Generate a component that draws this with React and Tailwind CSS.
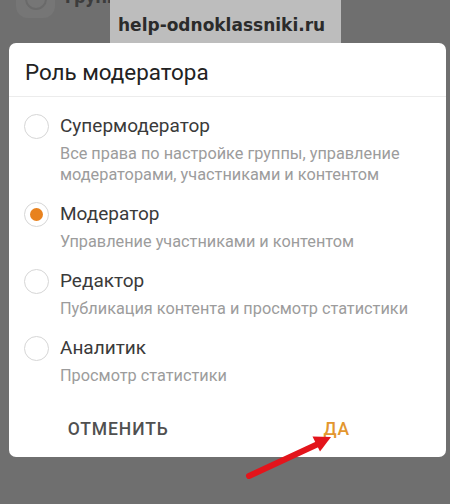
const roles = [
  { name: 'Супермодератор', desc: 'Все права по настройке группы, управление модераторами, участниками и контентом' },
  { name: 'Модератор', desc: 'Управление участниками и контентом', checked: true },
  { name: 'Редактор', desc: 'Публикация контента и просмотр статистики' },
  { name: 'Аналитик', desc: 'Просмотр статистики' },
]

function Radio({ checked }) {
  return (
    <div className="w-[25px] h-[25px] rounded-full border border-[#d6d6d6] bg-white flex items-center justify-center shrink-0">
      {checked && <div className="w-[13px] h-[13px] rounded-full bg-[#e8821e]" />}
    </div>
  )
}

export default function App() {
  return (
    <div className="relative w-[450px] h-[504px] overflow-hidden bg-[#6f6f6f] font-['Roboto',sans-serif]">
      {/* backdrop header */}
      <div className="relative h-[43px] flex items-start gap-[10px] pl-[16px]">
        <div className="w-[39px] h-[39px] -mt-[21px] rounded-[12px] bg-[#767676] flex items-center justify-center">
          <div className="w-[22px] h-[22px] rounded-full border-2 border-[#6a6a6a]" />
        </div>
        <div className="-mt-[15px] text-[20px] leading-[22px] font-bold text-[#3c3c3c]">Группа</div>
        <div className="absolute left-[110px] top-0 w-[231px] h-[43px] bg-[#bdbdbd] pl-[8px] pt-[14px] font-['DejaVu_Sans',sans-serif] font-bold text-[17px] leading-[22px] text-[#2b2b2b]">
          help-odnoklassniki.ru
        </div>
      </div>

      {/* dialog */}
      <div className="relative mx-[9px] w-[437px] h-[414px] bg-white rounded-[7px] flex flex-col">
        <div className="h-[54px] border-b border-[#ececec] pl-[16px] pt-[16px] text-[22.4px] leading-[26px] text-[#222]">
          Роль модератора
        </div>
        <div className="flex flex-col gap-[17px] pt-[17px]">
          {roles.map(r => (
            <div key={r.name} className="flex">
              <div className="w-[51px] pl-[15px] shrink-0">
                <Radio checked={r.checked} />
              </div>
              <div className="flex flex-col gap-[5px] pr-[14px]">
                <div className="text-[19px] leading-[24px] text-[#3a3a3a]">{r.name}</div>
                <div className="text-[16.3px] leading-[21px] text-[#9c9c9c]">{r.desc}</div>
              </div>
            </div>
          ))}
        </div>
        <div className="flex mt-[33px]">
          <button className="flex-1 text-center text-[17.5px] leading-[20px] font-medium tracking-[0.9px] text-[#505050]">ОТМЕНИТЬ</button>
          <button className="flex-1 text-center text-[17.5px] leading-[20px] font-medium tracking-[0.9px] text-[#e3962f]">ДА</button>
        </div>
      </div>

      {/* red arrow overlay */}
      <svg className="absolute left-0 top-0" width="450" height="504" viewBox="0 0 450 504">
        <line x1="249" y1="476" x2="318" y2="444" stroke="#e3141b" strokeWidth="6" strokeLinecap="round" />
        <polygon points="331,437 320,451.5 312.5,436.5" fill="#e3141b" />
      </svg>
    </div>
  )
}
